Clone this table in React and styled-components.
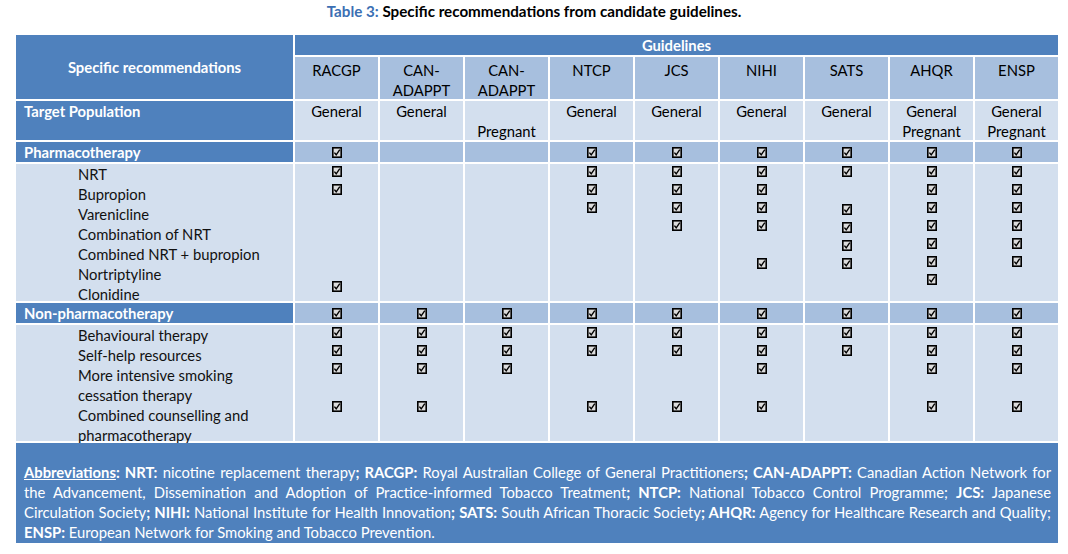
import React from "react";
import styled, { createGlobalStyle } from "styled-components";

const GlobalStyle = createGlobalStyle`
  body {
    margin: 0;
    background: #fff;
    font-family: Lato, "Open Sans", sans-serif;
    color: #000;
  }
`;

const guidelines = [
  ["RACGP"],
  ["CAN-", "ADAPPT"],
  ["CAN-", "ADAPPT"],
  ["NTCP"],
  ["JCS"],
  ["NIHI"],
  ["SATS"],
  ["AHQR"],
  ["ENSP"],
];

const targets = [
  ["General"],
  ["General"],
  ["", "Pregnant"],
  ["General"],
  ["General"],
  ["General"],
  ["General"],
  ["General", "Pregnant"],
  ["General", "Pregnant"],
];

const pharmItems = [
  "NRT",
  "Bupropion",
  "Varenicline",
  "Combination of NRT",
  "Combined NRT + bupropion",
  "Nortriptyline",
  "Clonidine",
];

const nonPharmItems = [
  "Behavioural therapy",
  "Self-help resources",
  "More intensive smoking",
  "cessation therapy",
  "Combined counselling and",
  "pharmacotherapy",
];

// slot positions (in 18px steps) of each tick, per guideline column
const pharmTicks = [
  [0, 1, 6.4],
  [],
  [],
  [0, 1, 2],
  [0, 1, 2, 3],
  [0, 1, 2, 3, 5.1],
  [0, 2.1, 3.1, 4.1, 5.1],
  [0, 1, 2, 3, 4, 5, 6],
  [0, 1, 2, 3, 4, 5],
];

const nonPharmTicks = [
  [0, 1, 2, 4.1],
  [0, 1, 2, 4.1],
  [0, 1, 2],
  [0, 1, 4.1],
  [0, 1, 4.1],
  [0, 1, 2, 4.1],
  [0, 1],
  [0, 1, 2, 4.1],
  [0, 1, 2, 4.1],
];

const pharmRow = [true, false, false, true, true, true, true, true, true];
const nonPharmRow = guidelines.map(() => true);

const CheckBox = () => (
  <svg width="10" height="11" viewBox="0 0 10 11">
    <rect x="0.8" y="0.8" width="8.4" height="9.4" fill="#dcdcdc" stroke="#000" strokeWidth="1.6" />
    <path d="M2.4 5.6 L4.2 7.8 L7.8 2.6" fill="none" stroke="#000" strokeWidth="1.4" />
  </svg>
);

export default function App() {
  return (
    <>
      <GlobalStyle />
      <Page>
        <Caption>
          <CaptionLabel>Table 3:</CaptionLabel> Specific recommendations from candidate guidelines.
        </Caption>
        <Grid>
          <HeadCell $rows={2}>Specific recommendations</HeadCell>
          <GuidelinesHead>Guidelines</GuidelinesHead>
          {guidelines.map((g, i) => (
            <SubHead key={i}>
              {g.map((l, j) => (
                <Line key={j}>{l}</Line>
              ))}
            </SubHead>
          ))}

          <Label>Target Population</Label>
          {targets.map((t, i) => (
            <LightCell key={i}>
              {t.map((l, j) => (
                <Line key={j}>{l || "\u00a0"}</Line>
              ))}
            </LightCell>
          ))}

          <Label>Pharmacotherapy</Label>
          {pharmRow.map((on, i) => (
            <MidCell key={i}>{on && <CheckBox />}</MidCell>
          ))}

          <ItemList>
            {pharmItems.map((t) => (
              <Line key={t}>{t}</Line>
            ))}
          </ItemList>
          {pharmTicks.map((col, i) => (
            <TickColumn key={i}>
              {col.map((p, j) => (
                <Slot key={j} $skip={p - (j ? col[j - 1] : -1) - 1}>
                  <CheckBox />
                </Slot>
              ))}
            </TickColumn>
          ))}

          <Label>Non-pharmacotherapy</Label>
          {nonPharmRow.map((on, i) => (
            <MidCell key={i}>{on && <CheckBox />}</MidCell>
          ))}

          <ItemList>
            {nonPharmItems.map((t) => (
              <Line key={t}>{t}</Line>
            ))}
          </ItemList>
          {nonPharmTicks.map((col, i) => (
            <TickColumn key={i}>
              {col.map((p, j) => (
                <Slot key={j} $skip={p - (j ? col[j - 1] : -1) - 1}>
                  <CheckBox />
                </Slot>
              ))}
            </TickColumn>
          ))}

          <Footer>
            <FootLine>
              <b>
                <u>Abbreviations</u>: NRT:
              </b>{" "}
              nicotine replacement therapy<b>; RACGP:</b> Royal Australian College of General
              Practitioners<b>; CAN-ADAPPT:</b> Canadian Action Network for
            </FootLine>
            <FootLine>
              the Advancement, Dissemination and Adoption of Practice-informed Tobacco Treatment
              <b>; NTCP:</b> National Tobacco Control Programme; <b>JCS:</b> Japanese
            </FootLine>
            <FootLine>
              Circulation Society<b>; NIHI:</b> National Institute for Health Innovation
              <b>; SATS:</b> South African Thoracic Society<b>; AHQR:</b> Agency for Healthcare
              Research and Quality;
            </FootLine>
            <LastLine>
              <b>ENSP:</b> European Network for Smoking and Tobacco Prevention.
            </LastLine>
          </Footer>
        </Grid>
      </Page>
    </>
  );
}

const Page = styled.div`
  width: 1068px;
  height: 554px;
  padding: 0 10px 0 16px;
  box-sizing: border-box;
  font-size: 14.8px;
`;

const Caption = styled.div`
  height: 22px;
  line-height: 22px;
  text-align: center;
  font-weight: bold;
  font-size: 15.2px;
  margin-left: -16px;
  margin-right: -10px;
`;

const CaptionLabel = styled.span`
  color: #3b6fb3;
`;

const Grid = styled.div`
  margin-top: 13px;
  width: 1042px;
  display: grid;
  grid-template-columns: 277px repeat(9, 1fr);
  grid-template-rows: 20px 42px 39px 20px 137px 20px 116px 100px;
  column-gap: 2px;
  row-gap: 2px;
`;

const HeadCell = styled.div`
  grid-row: span ${(p) => p.$rows};
  background: #4f81bd;
  color: #fff;
  font-weight: bold;
  display: flex;
  align-items: center;
  justify-content: center;
`;

const GuidelinesHead = styled.div`
  grid-column: span 9;
  background: #4f81bd;
  color: #fff;
  font-weight: bold;
  text-align: center;
  line-height: 20px;
`;

const SubHead = styled.div`
  background: #a7bfde;
  text-align: center;
  padding-top: 3px;
`;

const Line = styled.div`
  line-height: 20px;
  white-space: nowrap;
`;

const Label = styled.div`
  background: #4f81bd;
  color: #fff;
  font-weight: bold;
  padding-left: 8px;
  line-height: 20px;
`;

const LightCell = styled.div`
  background: #d3dfee;
  text-align: center;
`;

const MidCell = styled.div`
  background: #a7bfde;
  display: flex;
  align-items: center;
  justify-content: center;
`;

const ItemList = styled.div`
  background: #d3dfee;
  padding-left: 62px;
  line-height: 20px;
  color: #111;
`;

const TickColumn = styled.div`
  background: #d3dfee;
  display: flex;
  flex-direction: column;
  align-items: center;
`;

const Slot = styled.div`
  height: 18px;
  padding-top: 2px;
  box-sizing: border-box;
  line-height: 0;
  margin-top: ${(p) => p.$skip * 18}px;
`;

const Footer = styled.div`
  grid-column: 1 / -1;
  background: #4f81bd;
  color: #fff;
  padding: 19px 7px 0 8px;
  font-size: 14.8px;
`;

const FootLine = styled.div`
  line-height: 20px;
  text-align: justify;
  text-align-last: justify;
  white-space: nowrap;
`;

const LastLine = styled.div`
  line-height: 20px;
`;
